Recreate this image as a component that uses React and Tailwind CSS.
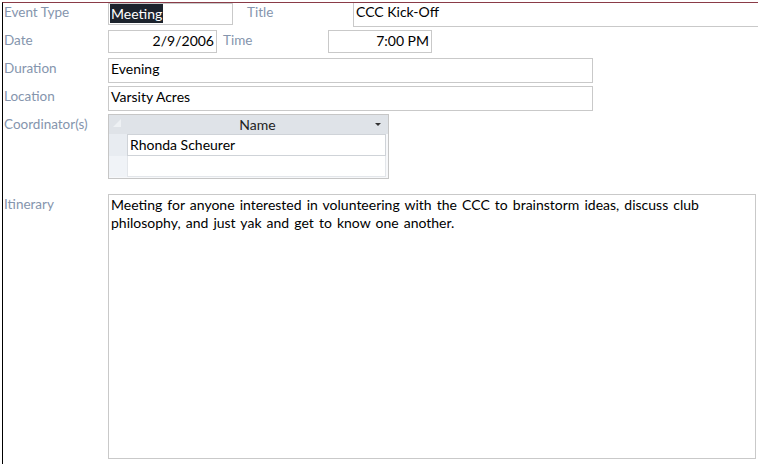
import React from "react";

const labelCls = "w-[105px] shrink-0 pl-[1px] text-[13.5px] text-[#8595ad] leading-[18px]";
const boxCls = "border border-[#c9c9c9] bg-white text-black text-[14px] leading-[18px]";

const App = () => {
  return (
    <div
      className="w-[758px] h-[464px] bg-white overflow-hidden pl-[2px] pt-[2px] text-[13.5px]"
      style={{ fontFamily: "Lato, 'Open Sans', sans-serif" }}
    >
      <div className="h-full border-l border-t border-l-black border-t-[#8a3b47]">
        {/* event type / title */}
        <div className="flex items-start h-[27px]">
          <div className={labelCls}>Event Type</div>
          <div className={`${boxCls} w-[125px] h-[22px] px-[1px]`}>
            <span className="bg-[#1c232d] text-white px-[1px] inline-block leading-[19px]">Meeting</span>
          </div>
          <div className="w-[120px] pl-[14px] text-[#8595ad] leading-[18px]">Title</div>
          <div className="flex-1 h-[24px] border-l border-b border-[#c9c9c9] pl-[2px] text-[14px] leading-[18px] text-black">
            CCC Kick-Off
          </div>
        </div>

        {/* date / time */}
        <div className="flex items-start h-[28px]">
          <div className={`${labelCls} pt-[1px]`}>Date</div>
          <div className={`${boxCls} w-[109px] h-[23px] pr-[2px] pt-[1px] text-right`}>2/9/2006</div>
          <div className="w-[111px] pl-[6px] pt-[1px] text-[#8595ad] leading-[18px]">Time</div>
          <div className={`${boxCls} w-[104px] h-[23px] pr-[2px] pt-[1px] text-right`}>7:00 PM</div>
        </div>

        {/* duration */}
        <div className="flex items-start h-[28px]">
          <div className={`${labelCls} pt-[1px]`}>Duration</div>
          <div className={`${boxCls} w-[485px] h-[25px] pl-[2px] pt-[1px]`}>Evening</div>
        </div>

        {/* location */}
        <div className="flex items-start h-[28px]">
          <div className={`${labelCls} pt-[1px]`}>Location</div>
          <div className={`${boxCls} w-[485px] h-[25px] pl-[2px] pt-[1px]`}>Varsity Acres</div>
        </div>

        {/* coordinators subform */}
        <div className="flex items-start h-[80px]">
          <div className={`${labelCls} w-[103px] pt-[1px]`}>Coordinator(s)</div>
          <div className="w-[281px] h-[65px] border border-[#c6c6c6] bg-[#f7f8fa] flex flex-col">
            <div className="flex h-[19px] bg-[#dfe3e8]">
              <div className="w-[18px] relative">
                <svg width="10" height="10" className="absolute left-[3px] top-[3px]" viewBox="0 0 10 10">
                  <polygon points="9,1 9,9 1,9" fill="#eef1f4" />
                </svg>
              </div>
              <div className="flex-1 relative text-center text-[14px] text-[#222] leading-[19px]">
                Name
                <svg width="6" height="4" viewBox="0 0 6 4" className="absolute right-[7px] top-[8px]">
                  <polygon points="0,0 6,0 3,3" fill="#333" />
                </svg>
              </div>
            </div>
            <div className="flex h-[22px]">
              <div className="w-[18px] bg-[#e8ecf1]" />
              <div className="w-[259px] border border-[#cfd3d8] bg-white pl-[2px] text-[14px] leading-[19px] text-black">
                Rhonda Scheurer
              </div>
            </div>
            <div className="flex h-[21px]">
              <div className="w-[18px] bg-[#f0f3f7]" />
              <div className="w-[259px] border border-t-0 border-[#e3e6ea] bg-white" />
            </div>
          </div>
        </div>

        {/* itinerary */}
        <div className="flex items-start">
          <div className={`${labelCls} pt-[1px]`}>Itinerary</div>
          <div className={`${boxCls} w-[648px] h-[265px] pl-[2px] pt-[1px] pr-[6px] [word-spacing:1.5px]`}>
            Meeting for anyone interested in volunteering with the CCC to brainstorm ideas, discuss club
            philosophy, and just yak and get to know one another.
          </div>
        </div>
      </div>
    </div>
  );
};

export default App;
